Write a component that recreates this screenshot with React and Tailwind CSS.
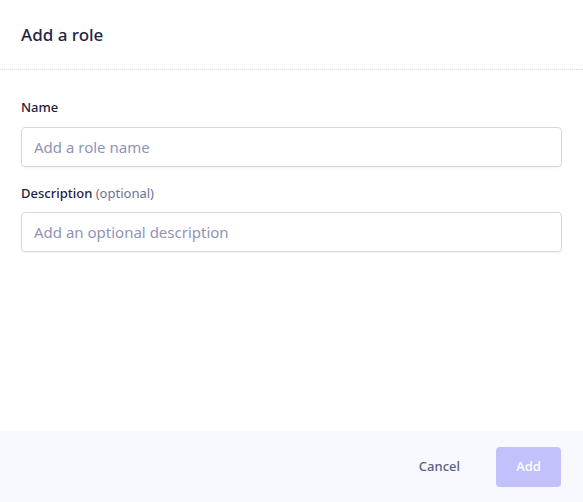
export default function App() {
  return (
    <div className="w-[583px] h-[502px] bg-white flex flex-col font-['Inter',sans-serif] text-[#1f2540]">
      <div className="h-[70px] px-[21px] flex items-center border-b border-dotted border-[#d6d9e6]">
        <h1 className="text-[17px] font-medium">Add a role</h1>
      </div>
      <div className="flex-1 px-[21px] pt-[28px]">
        <label className="block text-[13px] font-medium mb-[9px]">Name</label>
        <input
          placeholder="Add a role name"
          className="w-full h-[40px] rounded-[4px] border border-[#d3d7e6] px-[12px] text-[15px] placeholder-[#8f94b5] shadow-[0_1px_2px_rgba(0,0,0,0.05)] outline-none"
        />
        <label className="block text-[13px] font-medium mt-[17px] mb-[9px]">
          Description <span className="text-[#6d7396] font-normal">(optional)</span>
        </label>
        <input
          placeholder="Add an optional description"
          className="w-full h-[40px] rounded-[4px] border border-[#d3d7e6] px-[12px] text-[15px] placeholder-[#8f94b5] shadow-[0_1px_2px_rgba(0,0,0,0.05)] outline-none"
        />
      </div>
      <div className="h-[71px] bg-[#f8f9fe] flex items-center justify-end gap-[16px] px-[22px]">
        <button className="px-[20px] h-[40px] text-[13px] font-medium text-[#5b6180]">Cancel</button>
        <button className="w-[65px] h-[40px] rounded-[4px] bg-[#c2c1fb] text-white text-[13px] font-medium">Add</button>
      </div>
    </div>
  );
}
